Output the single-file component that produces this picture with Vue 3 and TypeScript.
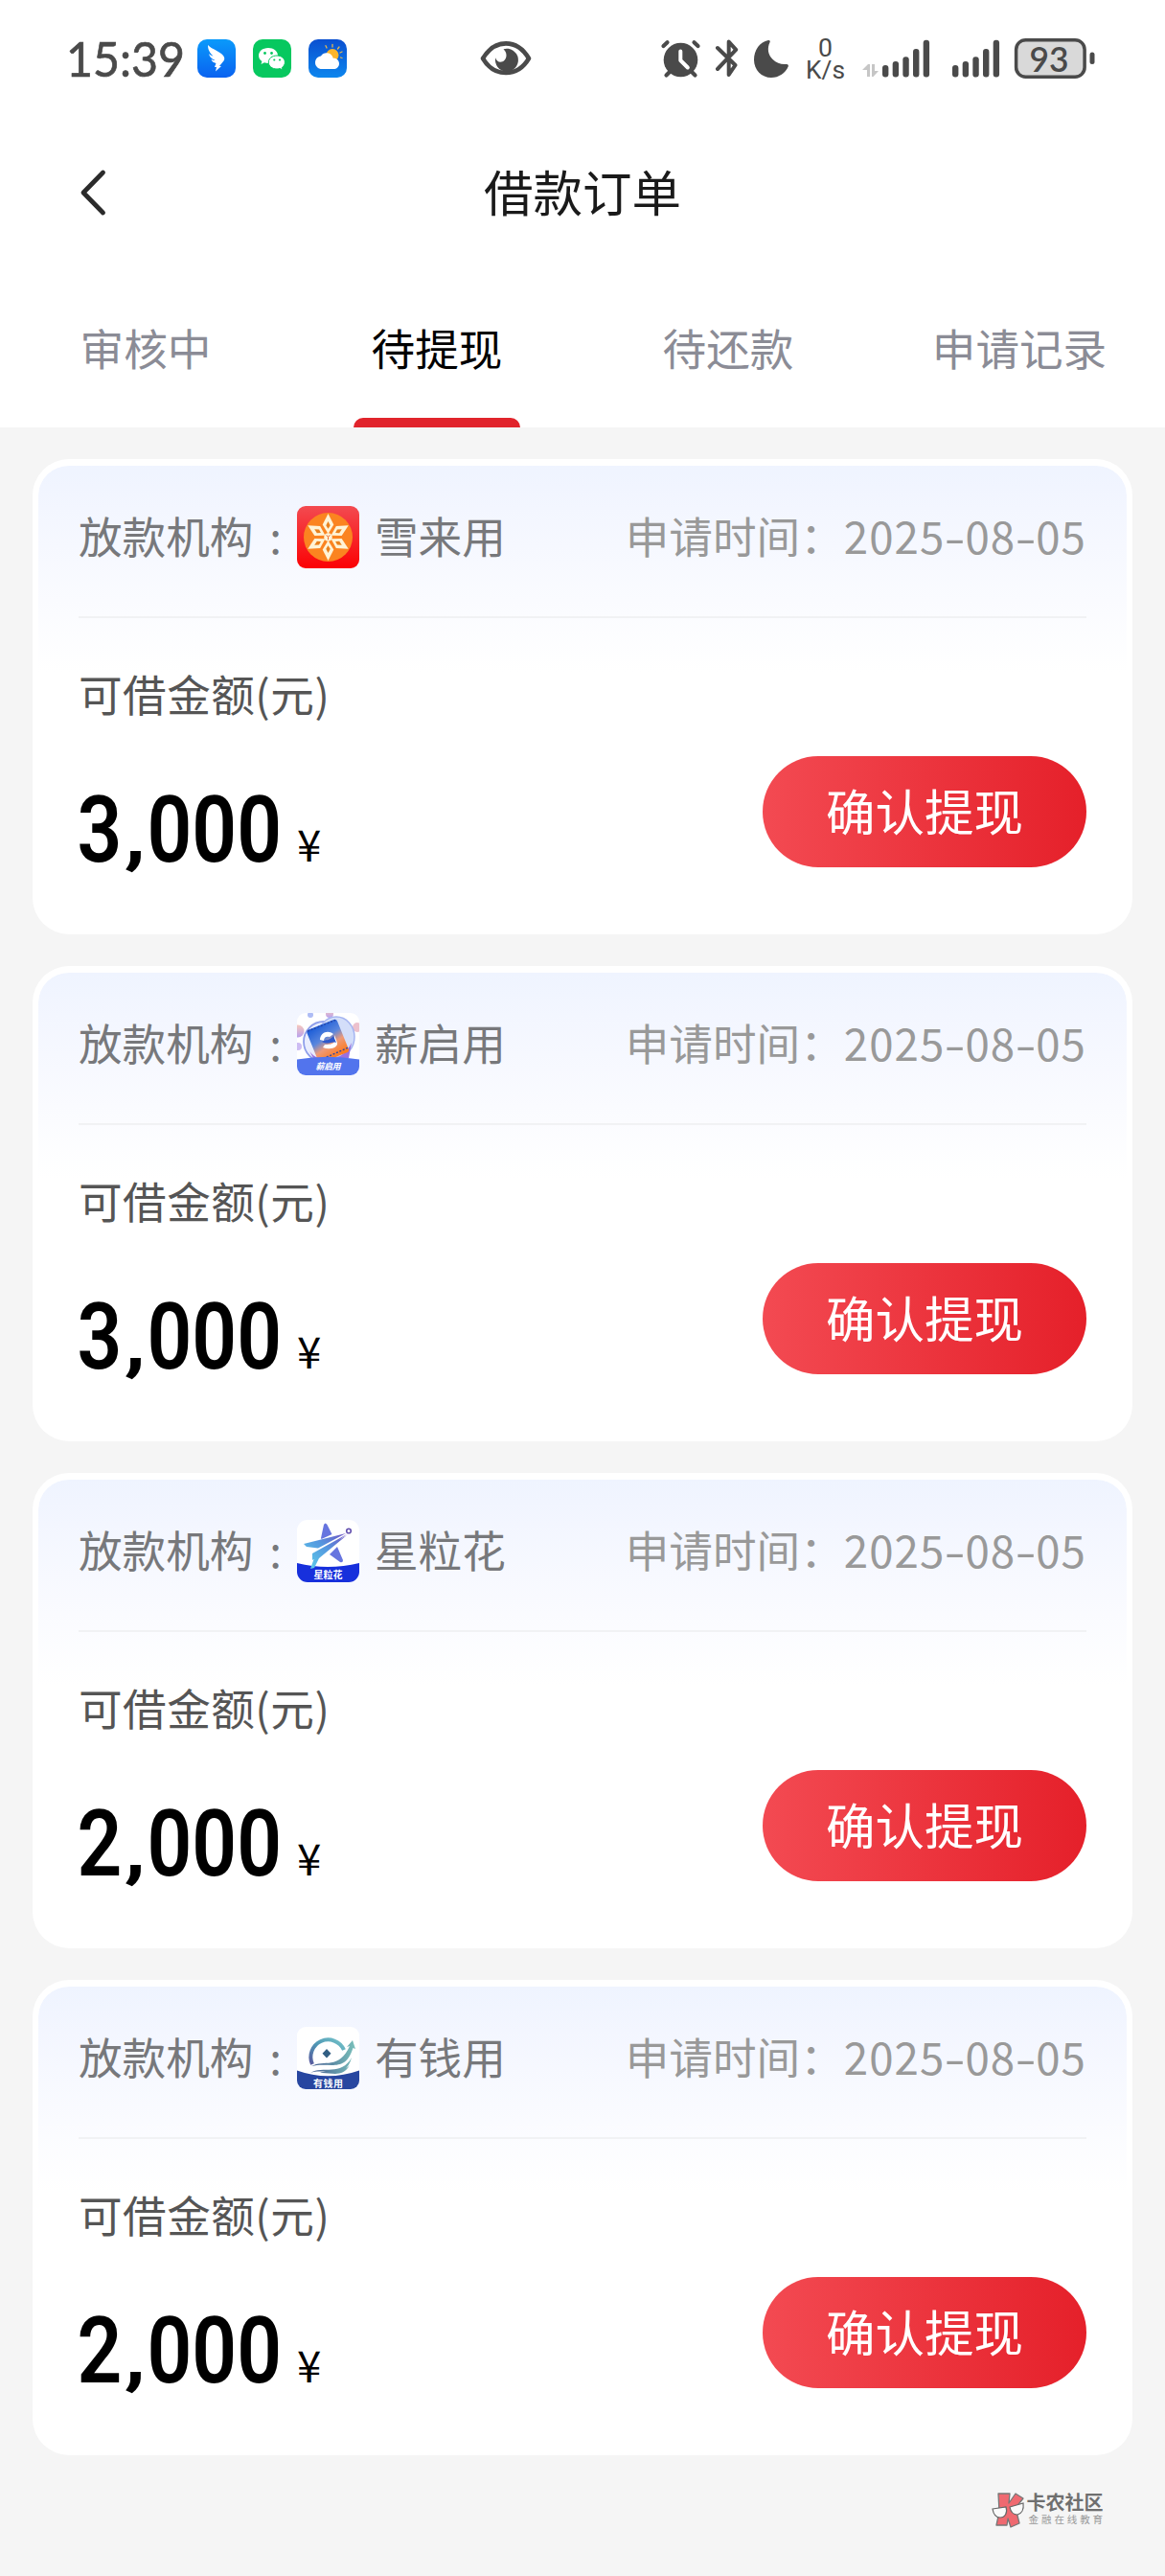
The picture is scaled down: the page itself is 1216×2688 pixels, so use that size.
<script setup lang="ts">
interface Order {
  org: string
  logo: 'snow' | 'ticket' | 'star' | 'coin'
  date: string
  amount: string
}

const tabs: string[] = ['审核中', '待提现', '待还款', '申请记录']
const activeTab = '待提现'

const orders: Order[] = [
  { org: '雪来用', logo: 'snow', date: '2025-08-05', amount: '3,000' },
  { org: '薪启用', logo: 'ticket', date: '2025-08-05', amount: '3,000' },
  { org: '星粒花', logo: 'star', date: '2025-08-05', amount: '2,000' },
  { org: '有钱用', logo: 'coin', date: '2025-08-05', amount: '2,000' },
]

const petals: number[] = [0, 60, 120, 180, 240, 300]
const signalTops: number[] = [28, 24, 19.3, 11, 1.7]
</script>

<template>
  <div class="page">
    <header class="top">
      <div class="status">
        <svg class="status-left" width="296" height="50" viewBox="70 36 296 50">
          <defs>
            <linearGradient id="blueA" x1="0" y1="0" x2="0" y2="1">
              <stop offset="0" stop-color="#0a9afb" /><stop offset="1" stop-color="#0a62f0" />
            </linearGradient>
            <linearGradient id="blueB" x1="0" y1="0" x2="0" y2="1">
              <stop offset="0" stop-color="#0a4fd0" /><stop offset="1" stop-color="#0c86ee" />
            </linearGradient>
          </defs>
          <text class="clock" x="69" y="80" textLength="124" lengthAdjust="spacingAndGlyphs">15:39</text>
          <rect x="206" y="41" width="40" height="40" rx="10" fill="url(#blueA)" />
          <path d="M217 47c5 5 12 6 16 11 1.600 2 1.600 4 .5 5.500L229 69h2l-6 5.500 1-4.500h-2l1.500-4c-3-1-4.500-2-5-4 2 1 3 1 4 1-4-2-6-4-6.500-7 2 2 3 2 4.500 2.500C219 55 217 52 217 47z" fill="#fff" />
          <rect x="264" y="41" width="40" height="40" rx="10" fill="#07c85f" />
          <path d="M280 50c-6 0-10 3.600-10 8 0 2.600 1.300 4.600 3.400 6l-.9 3 3.500-1.700c1.300.4 2.600.6 4 .6 5.600 0 10-3.400 10-7.900s-4.400-8-10-8z" fill="#fff" />
          <path d="M289 58c-5 0-8.700 3.100-8.700 7s3.700 7 8.700 7c1.100 0 2.200-.2 3.200-.5l2.900 1.500-.7-2.600c1.900-1.300 3-3.200 3-5.400 0-3.900-3.600-7-8.400-7z" fill="#fff" stroke="#07c85f" stroke-width="1" />
          <g fill="#07c85f"><circle cx="276.500" cy="55.500" r="1.400" /><circle cx="283.500" cy="55.500" r="1.400" /><circle cx="286.300" cy="62.500" r="1.100" /><circle cx="292" cy="62.500" r="1.100" /></g>
          <rect x="322" y="41" width="40" height="40" rx="10" fill="url(#blueB)" />
          <circle cx="347" cy="57.500" r="6.500" fill="#fbb52c" />
          <path d="M341 50l-1-2.300M347 49v-2.500M352.500 51l1.500-2M355 55l2-1M355.500 60l1.500.5" stroke="#e8b84f" stroke-width="1.300" stroke-linecap="round" />
          <path d="M336 72c-4 0-7-3-7-6.800s3-6.500 6-6.800c1.500-2.500 4-3.500 6.500-3.200 3.500.3 5.500 2.500 6.300 5.500 3.500-.4 6.200 2.300 6.200 5.500 0 3.500-2.500 5.800-6 5.800z" fill="#fff" />
        </svg>
        <svg class="status-eye" width="54" height="40" viewBox="501 41 54 40">
          <path d="M504 61C510 51 518 45.400 528 45.400S546 51 552 61C546 71 538 76 528 76S510 71 504 61z" fill="none" stroke="#4a4a4a" stroke-width="4.600" stroke-linejoin="round" />
          <path d="M525.500 51.200a12 12 0 1 1-8.300 9c1 3.400 3.500 5 6.500 4.300 4.500-1 7.300-8.300 1.800-13.300z" fill="#4a4a4a" />
        </svg>
        <svg class="status-right" width="456" height="48" viewBox="689 37 456 48">
          <g stroke="#4a4a4a" stroke-width="4.200" stroke-linecap="round" fill="none">
            <path d="M692.500 48l4-3.700M728.500 48l-4-3.700M695.500 78.500l4-4M725.500 78.500l-4-4" />
          </g>
          <circle cx="710.500" cy="62.500" r="17.800" fill="#4a4a4a" />
          <path d="M710.300 53.500v9.500l7.500 7.500" fill="none" stroke="#fff" stroke-width="4" stroke-linecap="round" stroke-linejoin="round" />
          <path d="M749 50l18.500 18-6.800 10V43.500l7.500 8.300L749 72" fill="none" stroke="#4a4a4a" stroke-width="4" stroke-linecap="round" stroke-linejoin="round" />
          <path d="M802 42c1.400-.3 2.200.8 1.600 2-3 6-2.200 13 3 18 4 3.900 9 5.600 14.200 5 1.500-.2 2.400.8 2 2.200C820 76 813 81 805 81c-10 0-18-8-18-18.500C787 52 793 44 802 42z" fill="#4a4a4a" />
          <text class="net" x="854" y="59" font-size="26" textLength="15" lengthAdjust="spacingAndGlyphs">0</text>
          <text class="net" x="841" y="82" font-size="26" textLength="41" lengthAdjust="spacingAndGlyphs">K/s</text>
          <path d="M900 73l6-6h2v13h-3v-7zM910 67h3v7h4l-5.500 6H910z" fill="#c6c6c6" />
          <g fill="#4a4a4a">
            <rect v-for="(t, i) in signalTops" :key="'a' + i" :x="921 + i * 10.67" :y="40 + t" width="6.400" :height="40.500 - t" rx="3" />
            <rect v-for="(t, i) in signalTops" :key="'b' + i" :x="994 + i * 10.67" :y="40 + t" width="6.400" :height="40.500 - t" rx="3" />
          </g>
          <rect x="1060.600" y="41.700" width="71.500" height="38.600" rx="10" fill="#d9d9d9" stroke="#4a4a4a" stroke-width="3.500" />
          <rect x="1137.500" y="54.500" width="5" height="12.500" rx="2.500" fill="#4a4a4a" />
          <text class="battery" x="1074.500" y="74.500" textLength="41" lengthAdjust="spacingAndGlyphs">93</text>
        </svg>
      </div>

      <div class="nav">
        <svg class="back" width="32" height="52" viewBox="0 0 32 52">
          <path d="M27.500 5L7 26l20.500 21" fill="none" stroke="#2b2b2b" stroke-width="4.800" stroke-linecap="round" stroke-linejoin="round" />
        </svg>
        <h1 class="title">借款订单</h1>
      </div>

      <nav class="tabs">
        <div v-for="tab in tabs" :key="tab" class="tab" :class="{ active: tab === activeTab }">
          <span>{{ tab }}</span>
        </div>
      </nav>
    </header>

    <main class="list">
      <section v-for="(order, n) in orders" :key="n" class="card">
        <div class="card-head">
          <span class="org-label">放款机构</span>
          <span class="org-colon">:</span>
          <svg v-if="order.logo === 'snow'" class="logo" viewBox="0 0 65 65">
            <defs>
              <linearGradient id="snowBg" x1="0" y1="0" x2="0" y2="1">
                <stop offset="0" stop-color="#f34a50" /><stop offset="1" stop-color="#fb0204" />
              </linearGradient>
            </defs>
            <rect width="65" height="65" rx="9" fill="url(#snowBg)" />
            <circle cx="32.500" cy="32.500" r="25.500" fill="#fb8420" />
            <g v-for="a in petals" :key="a" :transform="`rotate(${a} 32.500 32.500)`">
              <path d="M32.500 8l5.800 11.500-5.800 9.500-5.800-9.500z" fill="#fff3d6" />
              <path d="M32.500 16l2.200 4.300-2.200 3.400-2.200-3.400z" fill="#e8801c" />
            </g>
            <circle cx="32.500" cy="32.500" r="4.300" fill="#fff3d6" />
            <path d="M30.800 30.300l1.700 2.200 1.700-2.200M32.500 32.500v2.700" stroke="#ee6a2c" stroke-width="1" fill="none" />
          </svg>
          <svg v-else-if="order.logo === 'ticket'" class="logo" viewBox="0 0 65 65">
            <defs>
              <clipPath id="clipT"><rect width="65" height="65" rx="9" /></clipPath>
              <linearGradient id="tick" x1=".3" y1="0" x2=".5" y2="1">
                <stop offset="0" stop-color="#1f5fd8" /><stop offset=".4" stop-color="#5a86dd" /><stop offset=".65" stop-color="#ee9a78" /><stop offset="1" stop-color="#fb7b22" />
              </linearGradient>
              <linearGradient id="tball" x1="0" y1="0" x2="0" y2="1">
                <stop offset="0" stop-color="#f7c9bd" /><stop offset="1" stop-color="#b8a0ee" />
              </linearGradient>
            </defs>
            <g clip-path="url(#clipT)">
              <rect width="65" height="65" fill="#fff" />
              <circle cx="1" cy="19" r="6.500" fill="url(#tball)" /><circle cx="14" cy="2" r="3" fill="#aebcf5" /><circle cx="34" cy="1" r="4" fill="url(#tball)" /><circle cx="63" cy="15" r="5" fill="#ecc1cd" /><circle cx="1" cy="35" r="4" fill="#cdbcf3" />
              <circle cx="28" cy="30" r="21" fill="#e9edfe" stroke="#8f9fea" stroke-width="1.800" />
              <ellipse cx="41" cy="25" rx="19" ry="21" fill="#d3def9" stroke="#a5b5f1" stroke-width="1.500" />
              <path d="M12 38C18 51 45 56 57 31l-3 16H17z" fill="#9a70df" />
              <rect x="15" y="11" width="34" height="37" rx="3" fill="url(#tick)" transform="rotate(-22 32 29)" />
              <path d="M11 19L40 7.500M24 49L54 36" stroke="#2745a8" stroke-width="1.400" stroke-dasharray="2 1.700" />
              <path d="M24 28c0-7 8-11 14-6l-4 3c-3-1-6 0-6 4zM39 23l3 8c1 5-7 8-15 5l2-3c4 0 8 0 10-3z" fill="#fff" />
              <path d="M26 30c4-3 7 0 12-6l3 7c-5-2-8 3-15-1z" fill="#2e59cc" />
              <path d="M0 48.500Q32 43 65 48.500V65H0z" fill="#5274ed" />
            </g>
            <text x="19.500" y="59" font-size="9" font-weight="700" font-style="italic" fill="#fff" textLength="26">薪启用</text>
          </svg>
          <svg v-else-if="order.logo === 'star'" class="logo" viewBox="0 0 65 65">
            <defs>
              <clipPath id="clipS"><rect width="65" height="65" rx="11" /></clipPath>
              <linearGradient id="ray" x1="0" y1="1" x2="1" y2="0">
                <stop offset="0" stop-color="#5fd5ec" /><stop offset=".55" stop-color="#5498df" /><stop offset="1" stop-color="#7050c4" />
              </linearGradient>
            </defs>
            <g clip-path="url(#clipS)">
              <rect width="65" height="65" fill="#fff" />
              <path d="M0 45Q32 53 65 45V65H0z" fill="#1730dc" />
            </g>
            <path d="M25 19l3-14q1.500-3 3.500 0l5 10-11 5zM34 36l8-8 6 14q0 3-3 2z" fill="#6775df" />
            <path d="M7 25l44-11-29 15.500-12-1.500zM16 35l36-20-36 27zM14 51l5-14 33-21-29 24-5 10z" fill="url(#ray)" />
            <circle cx="54" cy="11.500" r="2.300" fill="#fff" stroke="#6350ae" stroke-width="1.600" />
            <text x="17.500" y="60.500" font-size="10" font-weight="700" fill="#fff" textLength="30">星粒花</text>
          </svg>
          <svg v-else class="logo" viewBox="0 0 65 65">
            <defs>
              <clipPath id="clipC"><rect width="65" height="65" rx="9" /></clipPath>
              <linearGradient id="ring" x1="0" y1="1" x2="1" y2="0">
                <stop offset="0" stop-color="#58599d" /><stop offset=".5" stop-color="#4f98b5" /><stop offset="1" stop-color="#75c3c9" />
              </linearGradient>
              <linearGradient id="wave" x1="0" y1="0" x2="1" y2="0">
                <stop offset="0" stop-color="#40588e" /><stop offset="1" stop-color="#7ac1bb" />
              </linearGradient>
            </defs>
            <g clip-path="url(#clipC)">
              <rect width="65" height="65" fill="#fff" />
              <path d="M0 45.500Q32 57 65 45.500V65H0z" fill="#2746a0" />
            </g>
            <path d="M16 39A18 18 0 1 1 49 24" fill="none" stroke="url(#ring)" stroke-width="4" />
            <path d="M31 23l4.500 4.700-4.500 4.800-4.500-4.800z" fill="#315e83" />
            <path d="M15 41C28 34 44 45 55 20l-3 1 6-7 3 9-2.500-1C50 49 34 36 15 41zM14 48c13-8 32 4 43-16-6 25-29 10-43 16zM24 48c10-4 22 2 31-8-8 14-20 7-31 8z" fill="url(#wave)" />
            <text x="17" y="63" font-size="10" font-weight="700" fill="#fff" textLength="31">有钱用</text>
          </svg>
          <span class="org-name">{{ order.org }}</span>
          <span class="time-label">申请时间：</span>
          <span class="date"><template v-for="(part, i) in order.date.split('-')" :key="i"><i v-if="i > 0" class="dash">-</i>{{ part }}</template></span>
        </div>
        <div class="card-body">
          <div class="figures">
            <div class="caption">可借金额(元)</div>
            <svg class="amount" width="290" height="96" viewBox="0 0 290 96">
              <text class="num" transform="translate(-1.500 82.500) scale(.845 1)">{{ order.amount[0] }}</text>
              <text class="num" transform="translate(47.500 80.500) scale(1 .8)">,</text>
              <text class="num" transform="translate(71.500 82.500) scale(.845 1)">{{ order.amount.slice(2) }}</text>
              <text class="yen" x="228" y="82.500">¥</text>
            </svg>
          </div>
          <button class="confirm" type="button">确认提现</button>
        </div>
      </section>
    </main>

    <footer class="mark">
      <svg width="36" height="38" viewBox="0 0 36 38">
        <path d="M7 2h12l-1 10 7-10 8 5-8 10 4 16-9 4-3-9-1 7H5l3-14z" fill="#ef6970" stroke="#777" stroke-width="1.300" stroke-linejoin="round" />
        <path d="M1 18l14-2c2 6-1 11-6 11-4 0-7-3-8-9zM19 16l14-4c1 7-2 11-6 12-4 0-7-2-8-8z" fill="#fafafa" stroke="#666" stroke-width="1.200" />
      </svg>
      <div class="mark-text">
        <strong>卡农社区</strong>
        <small>金融在线教育</small>
      </div>
    </footer>
  </div>
</template>

<style>
body {
  background: #f5f5f5;
}
</style>

<style scoped>
.page {
  width: 1216px;
  min-height: 2688px;
  background: #f5f5f5;
  font-family: "Noto Sans CJK SC", sans-serif;
  overflow: hidden;
}
svg { overflow: visible; }
.top {
  height: 446px;
  background: #fff;
  display: flex;
  flex-direction: column;
}
.status {
  height: 122px;
  display: flex;
  align-items: flex-start;
  padding-left: 70px;
}
.status svg { flex: none; }
.status-left { margin-top: 36px; }
.status-eye { margin: 41px 0 0 135px; }
.status-right { margin: 37px 0 0 134px; }
.clock {
  font: 400 50px Lato, sans-serif;
  fill: #4a4a4a;
  stroke: #4a4a4a;
  stroke-width: 0.7px;
}
.net { font-family: Roboto, sans-serif; fill: #4a4a4a; }
.battery { font: 600 37px Lato, sans-serif; fill: #4a4a4a; }
.nav {
  height: 160px;
  display: flex;
  align-items: center;
  padding: 0 80px;
}
.back { flex: none; margin-top: -2px; }
.title {
  flex: 1;
  margin: 0 32px 0 0;
  padding-bottom: 6px;
  text-align: center;
  font-size: 51.500px;
  font-weight: 400;
  line-height: 76px;
  color: #1a1a1a;
}
.tabs {
  flex: 1;
  display: flex;
}
.tab {
  flex: 1;
  display: flex;
  flex-direction: column;
  align-items: center;
  justify-content: space-between;
  padding-top: 46px;
  font-size: 45.600px;
  line-height: 68px;
  color: #8b8c96;
}
.tab.active { color: #000; }
.tab.active::after {
  content: "";
  width: 174px;
  height: 10px;
  border-radius: 10px 10px 0 0;
  background: #e1242c;
}
.list {
  display: flex;
  flex-direction: column;
  gap: 33px;
  padding: 33px 34px 0;
}
.card {
  box-sizing: border-box;
  height: 496px;
  border: 6px solid #fff;
  border-top-width: 7px;
  border-radius: 38px;
  padding: 0 42px;
  background: linear-gradient(180deg, #eff4ff 0, #f3f6ff 45px, #fafbff 140px, #fff 215px) padding-box, #fff border-box;
}
.card-head {
  box-sizing: border-box;
  height: 159px;
  padding-bottom: 8px;
  border-bottom: 2px solid #f1f2f4;
  display: flex;
  align-items: center;
  font-size: 45.600px;
  line-height: 68px;
  color: #77787b;
  white-space: nowrap;
}
.card-head > span { padding-bottom: 6px; }
.org-label { width: 183px; }
.org-colon { width: 45px; text-align: center; }
.logo { width: 65px; height: 65px; flex: none; }
.org-name { margin-left: 16px; }
.time-label { margin-left: auto; color: #999; }
.date { color: #999; letter-spacing: 1.100px; }
.dash {
  display: inline-block;
  width: 21px;
  text-align: center;
  font-style: normal;
  letter-spacing: 0;
  transform: scaleX(1.400);
}
.card-body {
  display: flex;
  justify-content: space-between;
}
.caption {
  margin-top: 44px;
  font-size: 45.600px;
  line-height: 68px;
  letter-spacing: 0.500px;
  color: #555;
}
.amount { display: block; margin-top: 59px; }
.num { font: 600 97px Roboto, sans-serif; fill: #000; }
.yen { font: 400 45.600px "Noto Sans CJK SC", sans-serif; fill: #000; }
.confirm {
  box-sizing: border-box;
  margin: 144px 0 0;
  padding: 0 0 5px;
  width: 338px;
  height: 116px;
  border: 0;
  border-radius: 58px;
  background: linear-gradient(90deg, #f34a52, #e5202a);
  color: #fff;
  font: 400 51.500px/76px "Noto Sans CJK SC", sans-serif;
}
.mark {
  display: flex;
  justify-content: flex-end;
  padding: 38px 62px 0 0;
}
.mark-text {
  display: flex;
  flex-direction: column;
  margin-left: 1px;
  white-space: nowrap;
}
.mark-text strong {
  font-size: 20px;
  line-height: 22px;
  font-weight: 700;
  color: #6f6f6f;
}
.mark-text small {
  margin: 1px 0 0 2px;
  font-size: 10.500px;
  line-height: 12px;
  letter-spacing: 2.900px;
  color: #999;
}
</style>
